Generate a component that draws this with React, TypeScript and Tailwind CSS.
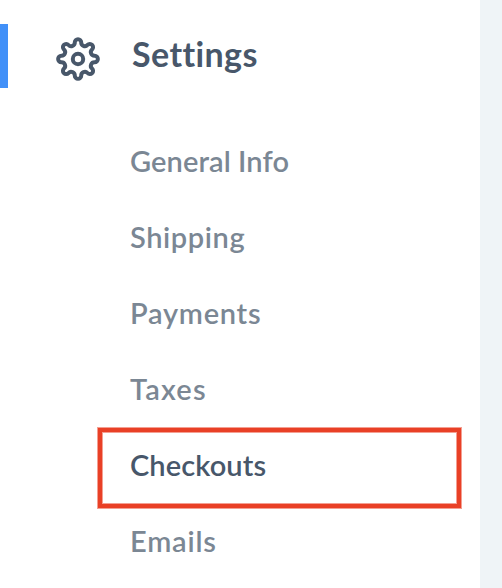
import clsx from 'clsx'

const items = [
  { label: 'General Info', className: 'tracking-[0.1px]' },
  { label: 'Shipping', className: 'tracking-[0.6px]' },
  { label: 'Payments', className: 'tracking-[0.75px]' },
  { label: 'Taxes', className: 'tracking-[1.2px]' },
  { label: 'Checkouts', className: 'tracking-[0.1px]', active: true },
  { label: 'Emails', className: 'tracking-[0.8px]' },
]

function CogIcon() {
  return (
    <svg
      className="size-11 shrink-0"
      viewBox="-22 -22 44 44"
      fill="none"
      stroke="currentColor"
      strokeWidth="4"
      strokeLinejoin="round"
    >
      <path d="M-3.2-16.65A3.2 3.2 0 0 1 3.2-16.65A3.63 3.63 0 0 0 9.51-14.03A3.2 3.2 0 1 1 14.03-9.51A3.63 3.63 0 0 0 16.65-3.2A3.2 3.2 0 0 1 16.65 3.2A3.63 3.63 0 0 0 14.03 9.51A3.2 3.2 0 1 1 9.51 14.03A3.63 3.63 0 0 0 3.2 16.65A3.2 3.2 0 0 1-3.2 16.65A3.63 3.63 0 0 0-9.51 14.03A3.2 3.2 0 1 1-14.03 9.51A3.63 3.63 0 0 0-16.65 3.2A3.2 3.2 0 0 1-16.65-3.2A3.63 3.63 0 0 0-14.03-9.51A3.2 3.2 0 1 1-9.51-14.03A3.63 3.63 0 0 0-3.2-16.65Z" />
      <circle r="5.2" />
    </svg>
  )
}

export default function App() {
  return (
    <div className="h-screen overflow-hidden bg-[#eff4f7] pr-[22px] font-['Lato',sans-serif]">
      <aside className="h-full overflow-hidden bg-white pt-6">
        <div className="flex h-16 items-center border-l-8 border-[#4190f8] pl-12 text-[#48576a]">
          <div className="pt-[6px]">
            <CogIcon />
          </div>
          <h1 className="ml-8 pb-[5px] text-[34px] leading-10 font-bold tracking-[0.4px]">Settings</h1>
        </div>
        <ul className="mt-9 ml-[98px] w-[363px]">
          {items.map((item) => (
            <li key={item.label} className="relative flex h-[76px] items-center pb-[2px] pl-8">
              {item.active && (
                <span className="absolute inset-x-0 top-0 h-20 border-4 border-[#e94026] shadow-[0_0_0_1px_#e9402680,inset_0_0_0_1px_#e9402680]" />
              )}
              <a
                href="#"
                className={clsx(
                  'text-[29px] leading-9 font-semibold whitespace-nowrap',
                  item.className,
                  item.active ? 'text-[#48576a]' : 'text-[#7b8794]',
                )}
              >
                {item.label}
              </a>
            </li>
          ))}
        </ul>
      </aside>
    </div>
  )
}
